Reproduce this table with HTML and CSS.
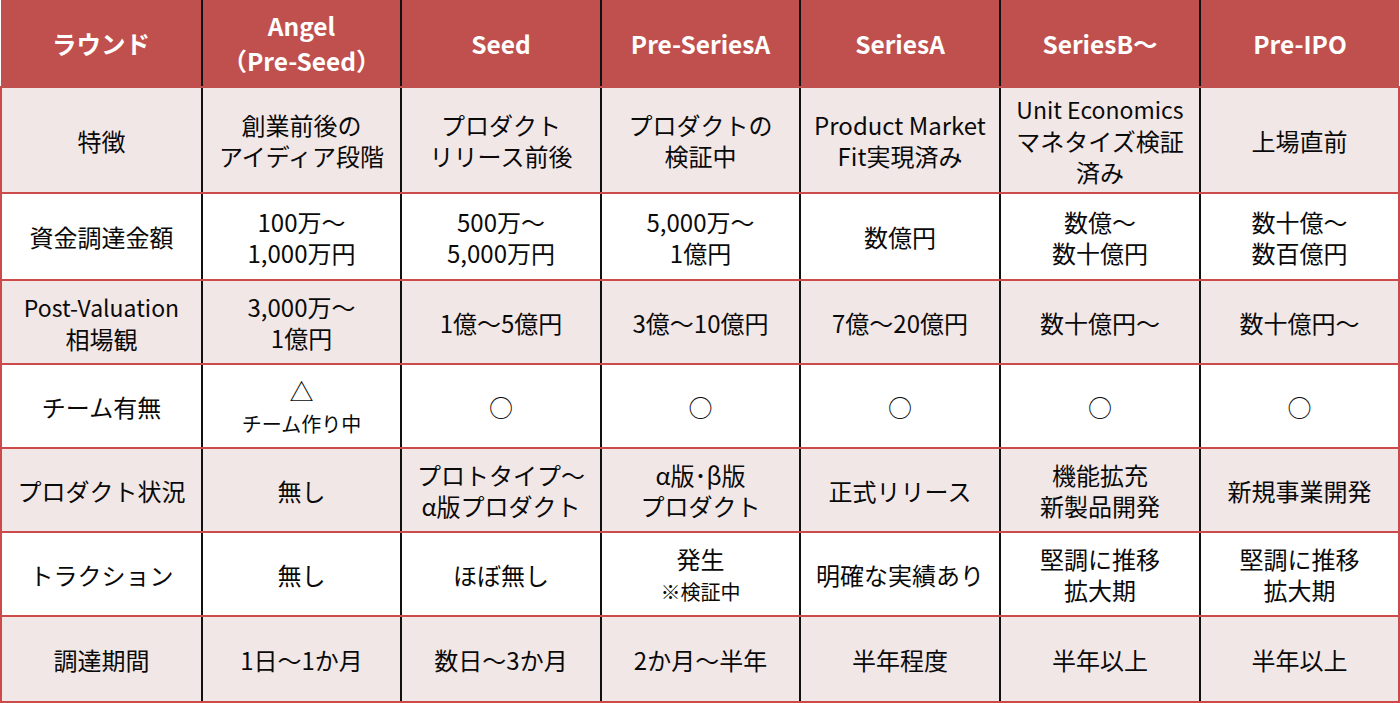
FILE: index.html
```html
<!DOCTYPE html>
<html lang="ja">
<head>
<meta charset="utf-8">
<link rel="stylesheet" href="styles.css">
</head>
<body>
<table class="rounds">
  <colgroup>
    <col class="c1"><col class="c2"><col class="c3"><col class="c4"><col class="c5"><col class="c6"><col class="c7">
  </colgroup>
  <thead>
    <tr>
      <th>ラウンド</th>
      <th>Angel<br>（Pre-Seed）</th>
      <th>Seed</th>
      <th>Pre-SeriesA</th>
      <th>SeriesA</th>
      <th>SeriesB〜</th>
      <th>Pre-IPO</th>
    </tr>
  </thead>
  <tbody>
    <tr class="pink r1">
      <td>特徴</td>
      <td>創業前後の<br>アイディア段階</td>
      <td>プロダクト<br>リリース前後</td>
      <td>プロダクトの<br>検証中</td>
      <td class="latin">Product Market<br>Fit実現済み</td>
      <td><span class="latin">Unit Economics</span><br>マネタイズ検証<br>済み</td>
      <td>上場直前</td>
    </tr>
    <tr class="white r2">
      <td>資金調達金額</td>
      <td>100万〜<br>1,000万円</td>
      <td>500万〜<br>5,000万円</td>
      <td>5,000万〜<br>1億円</td>
      <td>数億円</td>
      <td>数億〜<br>数十億円</td>
      <td>数十億〜<br>数百億円</td>
    </tr>
    <tr class="pink r3">
      <td><span class="latin">Post-Valuation</span><br>相場観</td>
      <td>3,000万〜<br>1億円</td>
      <td>1億〜5億円</td>
      <td>3億〜10億円</td>
      <td>7億〜20億円</td>
      <td>数十億円〜</td>
      <td>数十億円〜</td>
    </tr>
    <tr class="white r4">
      <td>チーム有無</td>
      <td><span class="mark">△</span><br><span class="small">チーム作り中</span></td>
      <td>○</td>
      <td>○</td>
      <td>○</td>
      <td>○</td>
      <td>○</td>
    </tr>
    <tr class="pink r5">
      <td>プロダクト状況</td>
      <td>無し</td>
      <td>プロトタイプ〜<br>α版プロダクト</td>
      <td>α版･β版<br>プロダクト</td>
      <td>正式リリース</td>
      <td>機能拡充<br>新製品開発</td>
      <td>新規事業開発</td>
    </tr>
    <tr class="white r6">
      <td>トラクション</td>
      <td>無し</td>
      <td>ほぼ無し</td>
      <td>発生<br><span class="small">※検証中</span></td>
      <td>明確な実績あり</td>
      <td>堅調に推移<br>拡大期</td>
      <td>堅調に推移<br>拡大期</td>
    </tr>
    <tr class="pink r7">
      <td>調達期間</td>
      <td>1日〜1か月</td>
      <td>数日〜3か月</td>
      <td>2か月〜半年</td>
      <td>半年程度</td>
      <td>半年以上</td>
      <td>半年以上</td>
    </tr>
  </tbody>
</table>
</body>
</html>
```

FILE: styles.css
```css
html, body {
  margin: 0;
  padding: 0;
  background: #ffffff;
}

body {
  font-family: "Noto Sans CJK JP", "Noto Sans", sans-serif;
  color: #0a0a0a;
}

.rounds {
  border-collapse: collapse;
  table-layout: fixed;
  width: 1398px;
}

.c1 { width: 201px; }
.c2 { width: 199px; }
.c3 { width: 200px; }
.c4 { width: 199px; }
.c5 { width: 200px; }
.c6 { width: 200px; }
.c7 { width: 199px; }

.rounds th {
  background: #c0504d;
  color: #ffffff;
  font-weight: 700;
  font-size: 24.5px;
  line-height: 35px;
  height: 86px;
  padding: 0;
  text-align: center;
  vertical-align: middle;
  border-left: 2px solid #111111;
  border-bottom: 2px solid #c0504d;
}

.rounds th:first-child {
  border-left: none;
}

.rounds td {
  font-size: 24px;
  font-weight: 400;
  line-height: 31px;
  padding: 0;
  text-align: center;
  vertical-align: middle;
  border-left: 2px solid #111111;
  border-bottom: 2px solid #cd4a4a;
}

.rounds td:first-child {
  border-left: 2px solid #cd4a4a;
}

.rounds td:last-child {
  border-right: 2px solid #cd4a4a;
}

.latin {
  font-size: 23px;
}

.pink td {
  background: #f2e7e7;
}

.white td {
  background: #ffffff;
}

.r1 td { height: 104px; }
.r2 td { height: 85px; }
.r3 td { height: 82px; }
.r4 td { height: 82px; }
.r5 td { height: 82px; }
.r6 td { height: 82px; }
.r7 td { height: 84px; }

.small {
  font-size: 20px;
  line-height: 26px;
}

.mark {
  line-height: 26px;
}
```
